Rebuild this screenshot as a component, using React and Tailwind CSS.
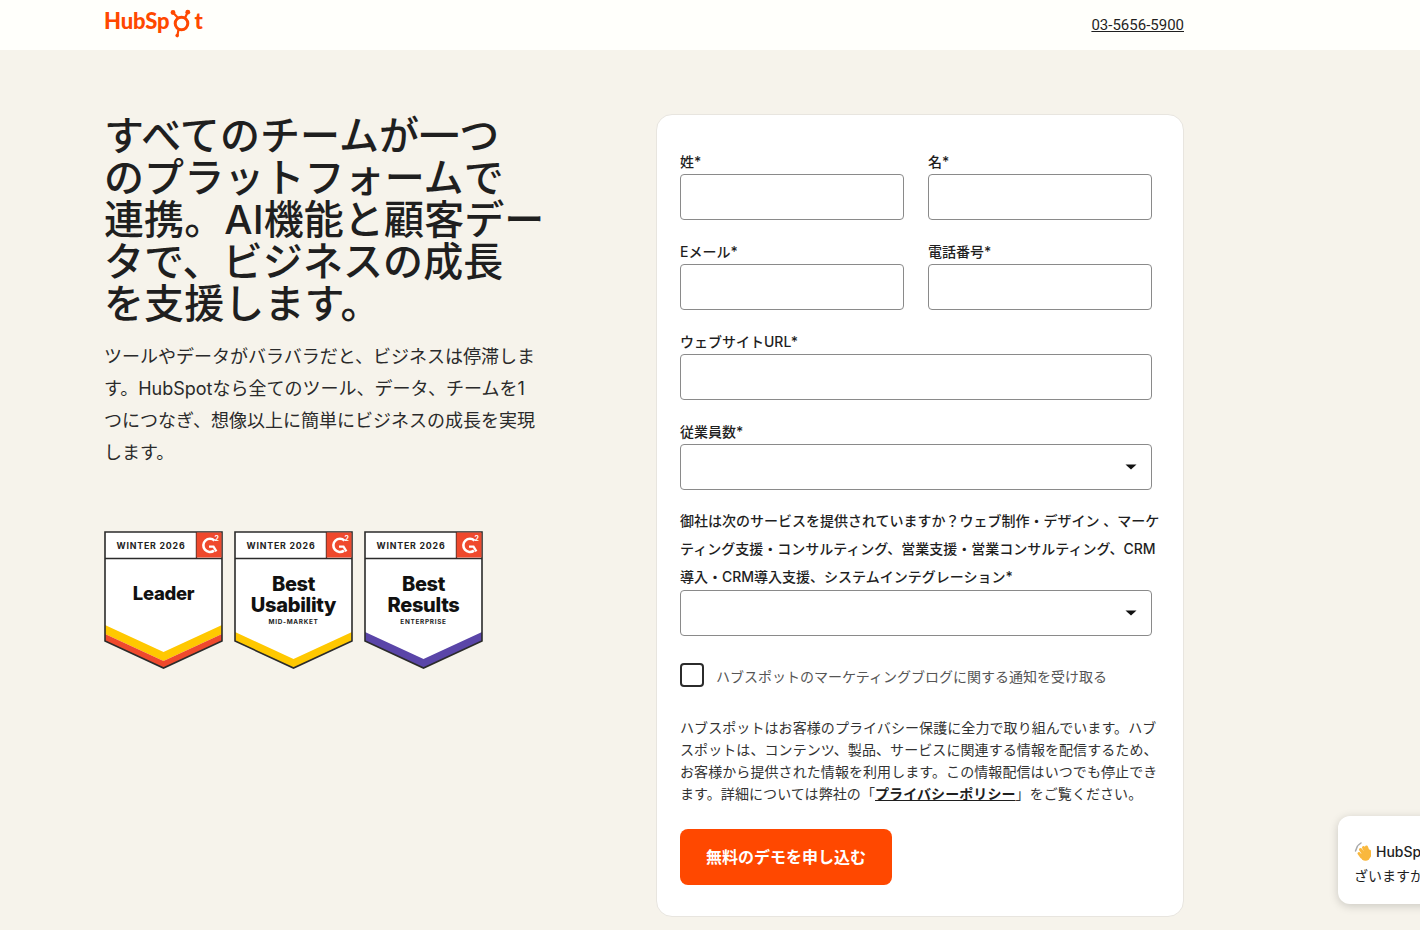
import React from 'react';

const fontStack = '[font-family:Inter,"Noto_Sans_CJK_JP",sans-serif]';

const Logo = () => (
  <div className="flex items-start h-[30px] text-[#ff4800] [font-family:Lato,sans-serif] text-[22px] font-black leading-[30px] tracking-[-0.1px]">
    <span className="-mt-[4px]">HubSp</span>
    <svg width="25" height="30" viewBox="0 0 25 30" fill="none" stroke="#ff4800" className="shrink-0 overflow-visible">
      <circle cx="11.5" cy="13.5" r="6.3" strokeWidth="3" />
      <path d="M8 8L3.5 3M15 8L17.5 2.5M8.5 19.5L7.5 25" strokeWidth="2.2" />
      <circle cx="3" cy="2.5" r="2.4" fill="#ff4800" stroke="none" />
      <circle cx="17.8" cy="2.2" r="2.4" fill="#ff4800" stroke="none" />
      <circle cx="7.2" cy="25.6" r="1.8" fill="#ff4800" stroke="none" />
    </svg>
    <span className="-mt-[4px]">t</span>
  </div>
);

const G2Box = () => (
  <g>
    <rect x="92.5" y="1.5" width="25" height="25" fill="#ef492d" />
    <path d="M110.5 9.6A6.6 6.6 0 1 0 110 19.6" fill="none" stroke="#fff" strokeWidth="2.6" />
    <path d="M105 15.6H109.5L112.4 20.4" fill="none" stroke="#fff" strokeWidth="2.2" />
    <text x="110.5" y="10" fontSize="7" fontWeight="700" fill="#fff" fontFamily="Inter, sans-serif">2</text>
  </g>
);

const Badge = ({ lines, sub, bands, titleY, titleSize = 20 }) => (
  <svg width="119" height="138" viewBox="0 0 119 138" className="shrink-0">
    <path d="M1 1H118V110L59.5 137L1 110Z" fill="#fff" />
    {bands.map((b) => (
      <path key={b.color} d={`M1 ${b.y}L59.5 ${b.y + 27}L118 ${b.y}V${b.y + b.h}L59.5 ${b.y + b.h + 27}L1 ${b.y + b.h}Z`} fill={b.color} />
    ))}
    <path d="M1 1H118V110L59.5 137L1 110Z" fill="none" stroke="#2b2b2b" strokeWidth="1.6" />
    <path d="M1 27.5H118M92.5 1V27.5" stroke="#2b2b2b" strokeWidth="1.4" />
    <text x="47" y="17.5" fontSize="8.8" fontWeight="700" letterSpacing="0.8" textAnchor="middle" fill="#222" fontFamily="Inter, sans-serif">WINTER 2026</text>
    <G2Box />
    {lines.map((l, i) => (
      <text key={l} x="59.5" y={titleY + i * 21} fontSize={titleSize} fontWeight="800" textAnchor="middle" fill="#111" fontFamily="Inter, sans-serif" letterSpacing="-0.3">{l}</text>
    ))}
    {sub && <text x="59.5" y="93" fontSize="6.4" fontWeight="700" letterSpacing="0.7" textAnchor="middle" fill="#222" fontFamily="Inter, sans-serif">{sub}</text>}
  </svg>
);

const Field = ({ label, className = '' }) => (
  <div className={className}>
    <label className="block h-[20px] text-sm leading-[20px] font-medium text-[#1f1f1f]">{label}</label>
    <input className="block w-full h-[46px] mt-[2px] bg-white border border-[#8a8a8a] rounded-[4px]" />
  </div>
);

const SelectBox = () => (
  <div className="flex items-center justify-end h-[46px] pr-[14px] bg-white border border-[#8a8a8a] rounded-[4px]">
    <svg width="12" height="6" viewBox="0 0 12 6"><path d="M0.5 0.5H11.5L6 5.5Z" fill="#111" /></svg>
  </div>
);

export default function App() {
  return (
    <div className={`relative h-[930px] overflow-hidden bg-[#f6f3eb] text-[#1f1f1f] ${fontStack}`}>
      <header className="h-[50px] bg-[#fffffb]">
        <div className="flex items-center justify-between w-[1080px] ml-[104px] h-full">
          <Logo />
          <a className="[font-family:Roboto,sans-serif] text-[15px] underline text-[#1f1f1f]">03-5656-5900</a>
        </div>
      </header>

      <main className="flex justify-between w-[1080px] ml-[104px] pt-[64px]">
        <div className="w-[436px]">
          <h1 className="mt-[1px] text-[40px] leading-[42px] font-medium tracking-[0.1px] whitespace-nowrap text-[#1f1f1f]">
            すべてのチームが一つ<br />
            のプラットフォームで<br />
            連携。AI機能と顧客デー<br />
            タで、ビジネスの成長<br />
            を支援します。
          </h1>
          <p className="mt-[16px] w-[434px] text-lg leading-[32px] text-[#2a2a2a]">
            ツールやデータがバラバラだと、ビジネスは停滞します。HubSpotなら全てのツール、データ、チームを1つにつなぎ、想像以上に簡単にビジネスの成長を実現します。
          </p>
          <div className="flex gap-[11px] mt-[62px]">
            <Badge lines={['Leader']} titleY={69} titleSize={18.5} bands={[{ color: '#ffc800', y: 94, h: 9 }, { color: '#ef492d', y: 103, h: 7 }]} />
            <Badge lines={['Best', 'Usability']} titleY={60} sub="MID-MARKET" bands={[{ color: '#ffc800', y: 101, h: 9 }]} />
            <Badge lines={['Best', 'Results']} titleY={60} sub="ENTERPRISE" bands={[{ color: '#5a45a8', y: 101, h: 9 }]} />
          </div>
        </div>

        <form className="w-[528px] h-[803px] pt-[37px] pl-[23px] pr-[23px] bg-white border border-[#e8e5df] rounded-[16px]">
          <div className="w-[472px]">
            <div className="grid grid-cols-2 gap-x-[24px] gap-y-[22px]">
              <Field label="姓*" />
              <Field label="名*" />
              <Field label="Eメール*" />
              <Field label="電話番号*" />
              <Field label="ウェブサイトURL*" className="col-span-2" />
              <div className="col-span-2">
                <label className="block h-[20px] text-sm leading-[20px] font-medium">従業員数*</label>
                <div className="mt-[2px]"><SelectBox /></div>
              </div>
            </div>
          </div>
          <label className="block w-[482px] mt-[17px] text-sm leading-[28px] font-medium">
            御社は次のサービスを提供されていますか？ウェブ制作・デザイン 、マーケティング支援・コンサルティング、営業支援・営業コンサルティング、CRM導入・CRM導入支援、システムインテグレーション*
          </label>
          <div className="w-[472px] mt-[-1px]"><SelectBox /></div>
          <div className="flex items-center gap-[12px] mt-[27px]">
            <span className="block w-[24px] h-[24px] -mt-[4px] bg-white border-2 border-[#2b2b2b] rounded-[4px]" />
            <span className="text-sm leading-[28px] text-[#555]">ハブスポットのマーケティングブログに関する通知を受け取る</span>
          </div>
          <p className="w-[482px] mt-[26px] text-sm leading-[22px] tracking-[0.08px] text-[#333]">
            ハブスポットはお客様のプライバシー保護に全力で取り組んでいます。ハブスポットは、コンテンツ、製品、サービスに関連する情報を配信するため、お客様から提供された情報を利用します。この情報配信はいつでも停止できます。詳細については弊社の「<a className="underline font-semibold text-[#1f1f1f]">プライバシーポリシー</a>」をご覧ください。
          </p>
          <button type="button" className="block w-[212px] h-[56px] mt-[24px] bg-[#ff4800] rounded-[8px] text-white text-base font-bold">
            無料のデモを申し込む
          </button>
        </form>
      </main>

      <div className="absolute left-[1338px] top-[816px] w-[240px] h-[88px] pt-[24px] pl-[16px] bg-white rounded-[12px] shadow-[0_2px_10px_rgba(0,0,0,0.18)] text-sm leading-[24px] whitespace-nowrap">
        <div className="flex items-center gap-[3px] font-medium">
          <svg width="19" height="20" viewBox="0 0 19 20" className="shrink-0" fill="none" strokeLinecap="round">
            <path d="M1.5 9L3.5 4M4.5 3L7 1" stroke="#a8a8a8" strokeWidth="1.5" />
            <g stroke="#f9b83d" strokeWidth="3">
              <path d="M5 11.5L7.5 15M6.5 7.5L10.5 13M9.5 5.5L13 12M12.5 5L15 11.5M15.5 9L15.5 14" />
            </g>
            <circle cx="11.5" cy="14" r="4.8" fill="#f9b83d" />
          </svg>
          <span>HubSpot</span>
        </div>
        <div>ざいますか</div>
      </div>
    </div>
  );
}
